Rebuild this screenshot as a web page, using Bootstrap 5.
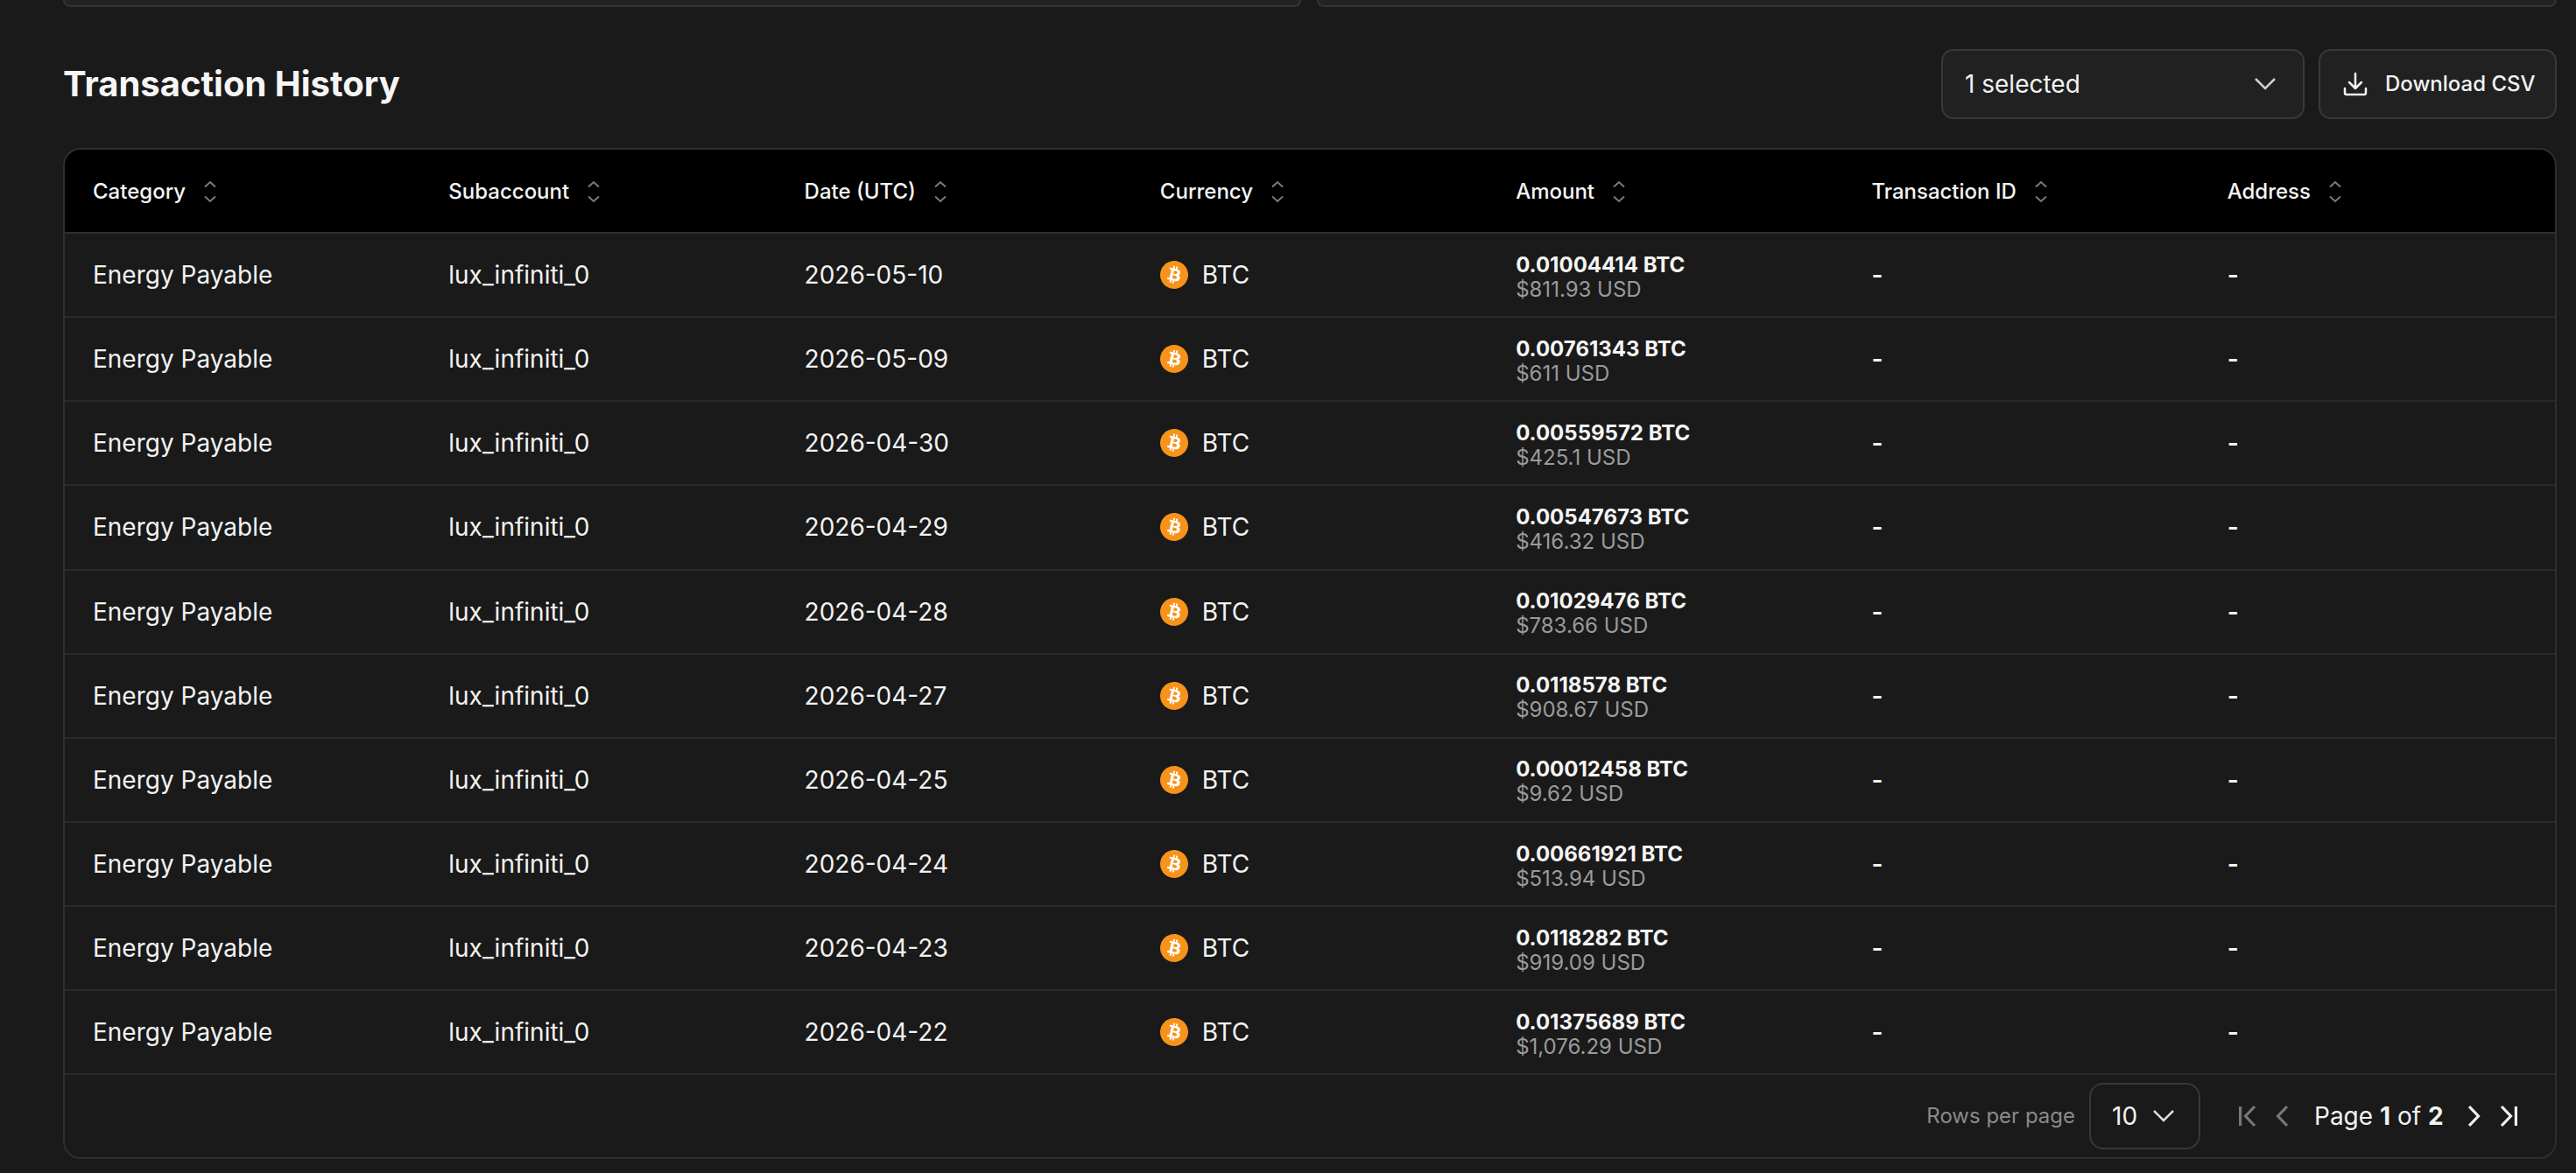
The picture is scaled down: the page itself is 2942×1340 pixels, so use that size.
<!DOCTYPE html>
<html lang="en">
<head>
<meta charset="utf-8">
<title>Transaction History</title>
<link href="https://cdn.jsdelivr.net/npm/bootstrap@5.3.0/dist/css/bootstrap.min.css" rel="stylesheet">
<style>
html,body{height:100%;}
body{background:#1a1a1a;color:#f2f2f2;font-family:Inter,"Liberation Sans",sans-serif;font-size:28px;overflow:hidden;}
.page-wrap{padding:0 22px 0 72px;}
.stub-row{gap:18px;height:8px;}
.stub-card{background:#232323;border:2px solid #353535;border-top:0;border-radius:0 0 16px 16px;}
.stub-a{width:1414px;}
.stub-b{flex:1;}
.head-row{margin-top:48px;margin-bottom:33px;height:80px;}
.page-title{font-size:40px;font-weight:700;line-height:48px;margin:0;color:#f5f5f5;}
.ctrl{background:#212121;border:2px solid #383838;border-radius:14px;height:80px;color:#f2f2f2;}
.ctrl-select{width:415px;padding:0 30px 0 25px;font-size:28px;}
.ctrl-btn{width:272px;padding:0 24px 0 26px;gap:20px;font-size:24px;font-weight:500;}
.tx-card{background:#1a1a1a;border:2px solid #2e2e33;border-radius:20px;overflow:hidden;}
.tx-table{margin:0;table-layout:fixed;width:100%;border-collapse:separate;border-spacing:0;--bs-table-bg:transparent;--bs-table-color:#f2f2f2;color:#f2f2f2;}
.tx-table th{background:#000;color:#f5f5f5;height:96px;padding:1px 0 0 32px;font-size:24px;font-weight:500;vertical-align:middle;border-bottom:2px solid #2e2e33;}
.tx-table td{height:96.15px;padding:0 0 0 32px;font-size:28px;font-weight:400;vertical-align:middle;border-bottom:2px solid #2a2a2e;background:transparent;color:#f2f2f2;}
.tx-table td.dash-cell{font-weight:600;}
.th-inner{gap:20px;}
.amt-wrap{padding-top:5px;}
.amt-main{font-size:24px;font-weight:700;line-height:28px;color:#f5f5f5;}
.amt-sub{font-size:24px;line-height:28px;color:#9a9a9a;}
.coin{gap:16px;}
.tx-foot{height:94px;padding-right:43px;}
.rows-label{font-size:24px;color:#8a8a8a;margin-right:16px;}
.rows-select{width:127px;height:76px;border:2px solid #383838;border-radius:16px;padding:0 27px 0 24px;font-size:28px;margin-right:44px;}
.pager-text{font-size:28px;margin:0 32px 0 30px;width:144px;white-space:nowrap;}
.pager-text b{font-weight:700;}
.pager-gap{gap:22px;}
svg{display:block;flex:none;}
</style>
</head>
<body>
<svg width="0" height="0" class="position-absolute">
  <defs>
    <symbol id="sort" viewBox="0 0 16 26"><path d="M2 7.500 8 2l6 5.500M2 18.500 8 24l6-5.500" fill="none" stroke="#7a7a7a" stroke-width="2"/></symbol>
    <symbol id="btc" viewBox="0 0 24 24"><circle cx="12" cy="12" r="10" fill="#fff"/><path fill="#f7931a" d="M23.638 14.904c-1.602 6.43-8.113 10.34-14.542 8.736C2.67 22.05-1.244 15.525.362 9.105 1.962 2.67 8.475-1.243 14.9.358c6.43 1.605 10.342 8.115 8.738 14.548v-.002zm-6.35-4.613c.24-1.59-.974-2.45-2.64-3.03l.54-2.153-1.315-.33-.525 2.107c-.345-.087-.705-.167-1.064-.25l.526-2.127-1.32-.33-.54 2.165c-.285-.067-.565-.132-.84-.2l-1.815-.45-.35 1.407s.975.225.955.236c.535.136.63.486.615.766l-1.477 5.92c-.075.166-.24.406-.614.314.015.02-.96-.24-.96-.24l-.66 1.51 1.71.426.93.242-.54 2.19 1.32.327.54-2.17c.36.1.705.19 1.05.273l-.51 2.154 1.32.33.545-2.19c2.24.427 3.93.257 4.64-1.774.57-1.637-.03-2.58-1.217-3.196.854-.193 1.5-.76 1.68-1.93h.01zm-3.01 4.22c-.404 1.64-3.157.75-4.05.53l.72-2.9c.896.23 3.757.67 3.33 2.37zm.41-4.24c-.37 1.49-2.662.735-3.405.55l.654-2.64c.744.18 3.137.524 2.75 2.084v.006z"/></symbol>
  </defs>
</svg>
<div class="page-wrap">
  <div class="d-flex stub-row"><div class="stub-card stub-a"></div><div class="stub-card stub-b"></div></div>

  <div class="d-flex align-items-center justify-content-between head-row">
    <h2 class="page-title">Transaction History</h2>
    <div class="d-flex gap-3">
      <div class="ctrl ctrl-select d-flex align-items-center justify-content-between"><span>1 selected</span>
        <svg width="26" height="16" viewBox="0 0 26 16"><path d="M2 2l11 11L24 2" fill="none" stroke="#d0d0d0" stroke-width="2.500"/></svg></div>
      <div class="ctrl ctrl-btn d-flex align-items-center"><svg width="28" height="28" viewBox="0 0 28 28" fill="none" stroke="#f2f2f2" stroke-width="2.500" stroke-linecap="round" stroke-linejoin="round"><path d="M14 2v16M7 12l7 7 7-7M2 19v5a2 2 0 0 0 2 2h20a2 2 0 0 0 2-2v-5"/></svg><span class="text-nowrap">Download CSV</span></div>
    </div>
  </div>

  <div class="tx-card">
    <table class="table tx-table">
      <thead><tr>
        <th><div class="d-flex align-items-center th-inner">Category<svg width="16" height="26"><use href="#sort"/></svg></div></th>
        <th><div class="d-flex align-items-center th-inner">Subaccount<svg width="16" height="26"><use href="#sort"/></svg></div></th>
        <th><div class="d-flex align-items-center th-inner">Date (UTC)<svg width="16" height="26"><use href="#sort"/></svg></div></th>
        <th><div class="d-flex align-items-center th-inner">Currency<svg width="16" height="26"><use href="#sort"/></svg></div></th>
        <th><div class="d-flex align-items-center th-inner">Amount<svg width="16" height="26"><use href="#sort"/></svg></div></th>
        <th><div class="d-flex align-items-center th-inner">Transaction ID<svg width="16" height="26"><use href="#sort"/></svg></div></th>
        <th><div class="d-flex align-items-center th-inner">Address<svg width="16" height="26"><use href="#sort"/></svg></div></th>
      </tr></thead>
      <tbody>
        <tr><td>Energy Payable</td><td>lux_infiniti_0</td><td>2026-05-10</td><td><div class="d-flex align-items-center coin"><svg width="32" height="32"><use href="#btc"/></svg>BTC</div></td><td><div class="amt-wrap"><div class="amt-main">0.01004414 BTC</div><div class="amt-sub">$811.93 USD</div></div></td><td class="dash-cell">-</td><td class="dash-cell">-</td></tr>
        <tr><td>Energy Payable</td><td>lux_infiniti_0</td><td>2026-05-09</td><td><div class="d-flex align-items-center coin"><svg width="32" height="32"><use href="#btc"/></svg>BTC</div></td><td><div class="amt-wrap"><div class="amt-main">0.00761343 BTC</div><div class="amt-sub">$611 USD</div></div></td><td class="dash-cell">-</td><td class="dash-cell">-</td></tr>
        <tr><td>Energy Payable</td><td>lux_infiniti_0</td><td>2026-04-30</td><td><div class="d-flex align-items-center coin"><svg width="32" height="32"><use href="#btc"/></svg>BTC</div></td><td><div class="amt-wrap"><div class="amt-main">0.00559572 BTC</div><div class="amt-sub">$425.1 USD</div></div></td><td class="dash-cell">-</td><td class="dash-cell">-</td></tr>
        <tr><td>Energy Payable</td><td>lux_infiniti_0</td><td>2026-04-29</td><td><div class="d-flex align-items-center coin"><svg width="32" height="32"><use href="#btc"/></svg>BTC</div></td><td><div class="amt-wrap"><div class="amt-main">0.00547673 BTC</div><div class="amt-sub">$416.32 USD</div></div></td><td class="dash-cell">-</td><td class="dash-cell">-</td></tr>
        <tr><td>Energy Payable</td><td>lux_infiniti_0</td><td>2026-04-28</td><td><div class="d-flex align-items-center coin"><svg width="32" height="32"><use href="#btc"/></svg>BTC</div></td><td><div class="amt-wrap"><div class="amt-main">0.01029476 BTC</div><div class="amt-sub">$783.66 USD</div></div></td><td class="dash-cell">-</td><td class="dash-cell">-</td></tr>
        <tr><td>Energy Payable</td><td>lux_infiniti_0</td><td>2026-04-27</td><td><div class="d-flex align-items-center coin"><svg width="32" height="32"><use href="#btc"/></svg>BTC</div></td><td><div class="amt-wrap"><div class="amt-main">0.0118578 BTC</div><div class="amt-sub">$908.67 USD</div></div></td><td class="dash-cell">-</td><td class="dash-cell">-</td></tr>
        <tr><td>Energy Payable</td><td>lux_infiniti_0</td><td>2026-04-25</td><td><div class="d-flex align-items-center coin"><svg width="32" height="32"><use href="#btc"/></svg>BTC</div></td><td><div class="amt-wrap"><div class="amt-main">0.00012458 BTC</div><div class="amt-sub">$9.62 USD</div></div></td><td class="dash-cell">-</td><td class="dash-cell">-</td></tr>
        <tr><td>Energy Payable</td><td>lux_infiniti_0</td><td>2026-04-24</td><td><div class="d-flex align-items-center coin"><svg width="32" height="32"><use href="#btc"/></svg>BTC</div></td><td><div class="amt-wrap"><div class="amt-main">0.00661921 BTC</div><div class="amt-sub">$513.94 USD</div></div></td><td class="dash-cell">-</td><td class="dash-cell">-</td></tr>
        <tr><td>Energy Payable</td><td>lux_infiniti_0</td><td>2026-04-23</td><td><div class="d-flex align-items-center coin"><svg width="32" height="32"><use href="#btc"/></svg>BTC</div></td><td><div class="amt-wrap"><div class="amt-main">0.0118282 BTC</div><div class="amt-sub">$919.09 USD</div></div></td><td class="dash-cell">-</td><td class="dash-cell">-</td></tr>
        <tr><td>Energy Payable</td><td>lux_infiniti_0</td><td>2026-04-22</td><td><div class="d-flex align-items-center coin"><svg width="32" height="32"><use href="#btc"/></svg>BTC</div></td><td><div class="amt-wrap"><div class="amt-main">0.01375689 BTC</div><div class="amt-sub">$1,076.29 USD</div></div></td><td class="dash-cell">-</td><td class="dash-cell">-</td></tr>
      </tbody>
    </table>
    <div class="d-flex align-items-center justify-content-end tx-foot">
      <span class="rows-label">Rows per page</span>
      <div class="rows-select d-flex align-items-center justify-content-between"><span>10</span>
        <svg width="26" height="16" viewBox="0 0 26 16"><path d="M2 2l11 11L24 2" fill="none" stroke="#e0e0e0" stroke-width="2.500"/></svg></div>
      <div class="d-flex align-items-center">
        <div class="d-flex align-items-center pager-gap">
          <svg width="20" height="26" viewBox="0 0 20 26" fill="none" stroke="#777" stroke-width="3.200"><path d="M1.600 2v22M18 2 7.500 13 18 24"/></svg>
          <svg width="14" height="26" viewBox="0 0 14 26" fill="none" stroke="#777" stroke-width="3.200"><path d="M13 2 2.500 13 13 24"/></svg>
        </div>
        <span class="pager-text">Page <b>1</b> of <b>2</b></span>
        <div class="d-flex align-items-center pager-gap">
          <svg width="14" height="26" viewBox="0 0 14 26" fill="none" stroke="#f2f2f2" stroke-width="3.200"><path d="M1 2l10.500 11L1 24"/></svg>
          <svg width="20" height="26" viewBox="0 0 20 26" fill="none" stroke="#f2f2f2" stroke-width="3.200"><path d="M2 2l10.500 11L2 24M18.400 2v22"/></svg>
        </div>
      </div>
    </div>
  </div>
</div>
<script src="https://cdn.jsdelivr.net/npm/bootstrap@5.3.0/dist/js/bootstrap.bundle.min.js"></script>
</body>
</html>
